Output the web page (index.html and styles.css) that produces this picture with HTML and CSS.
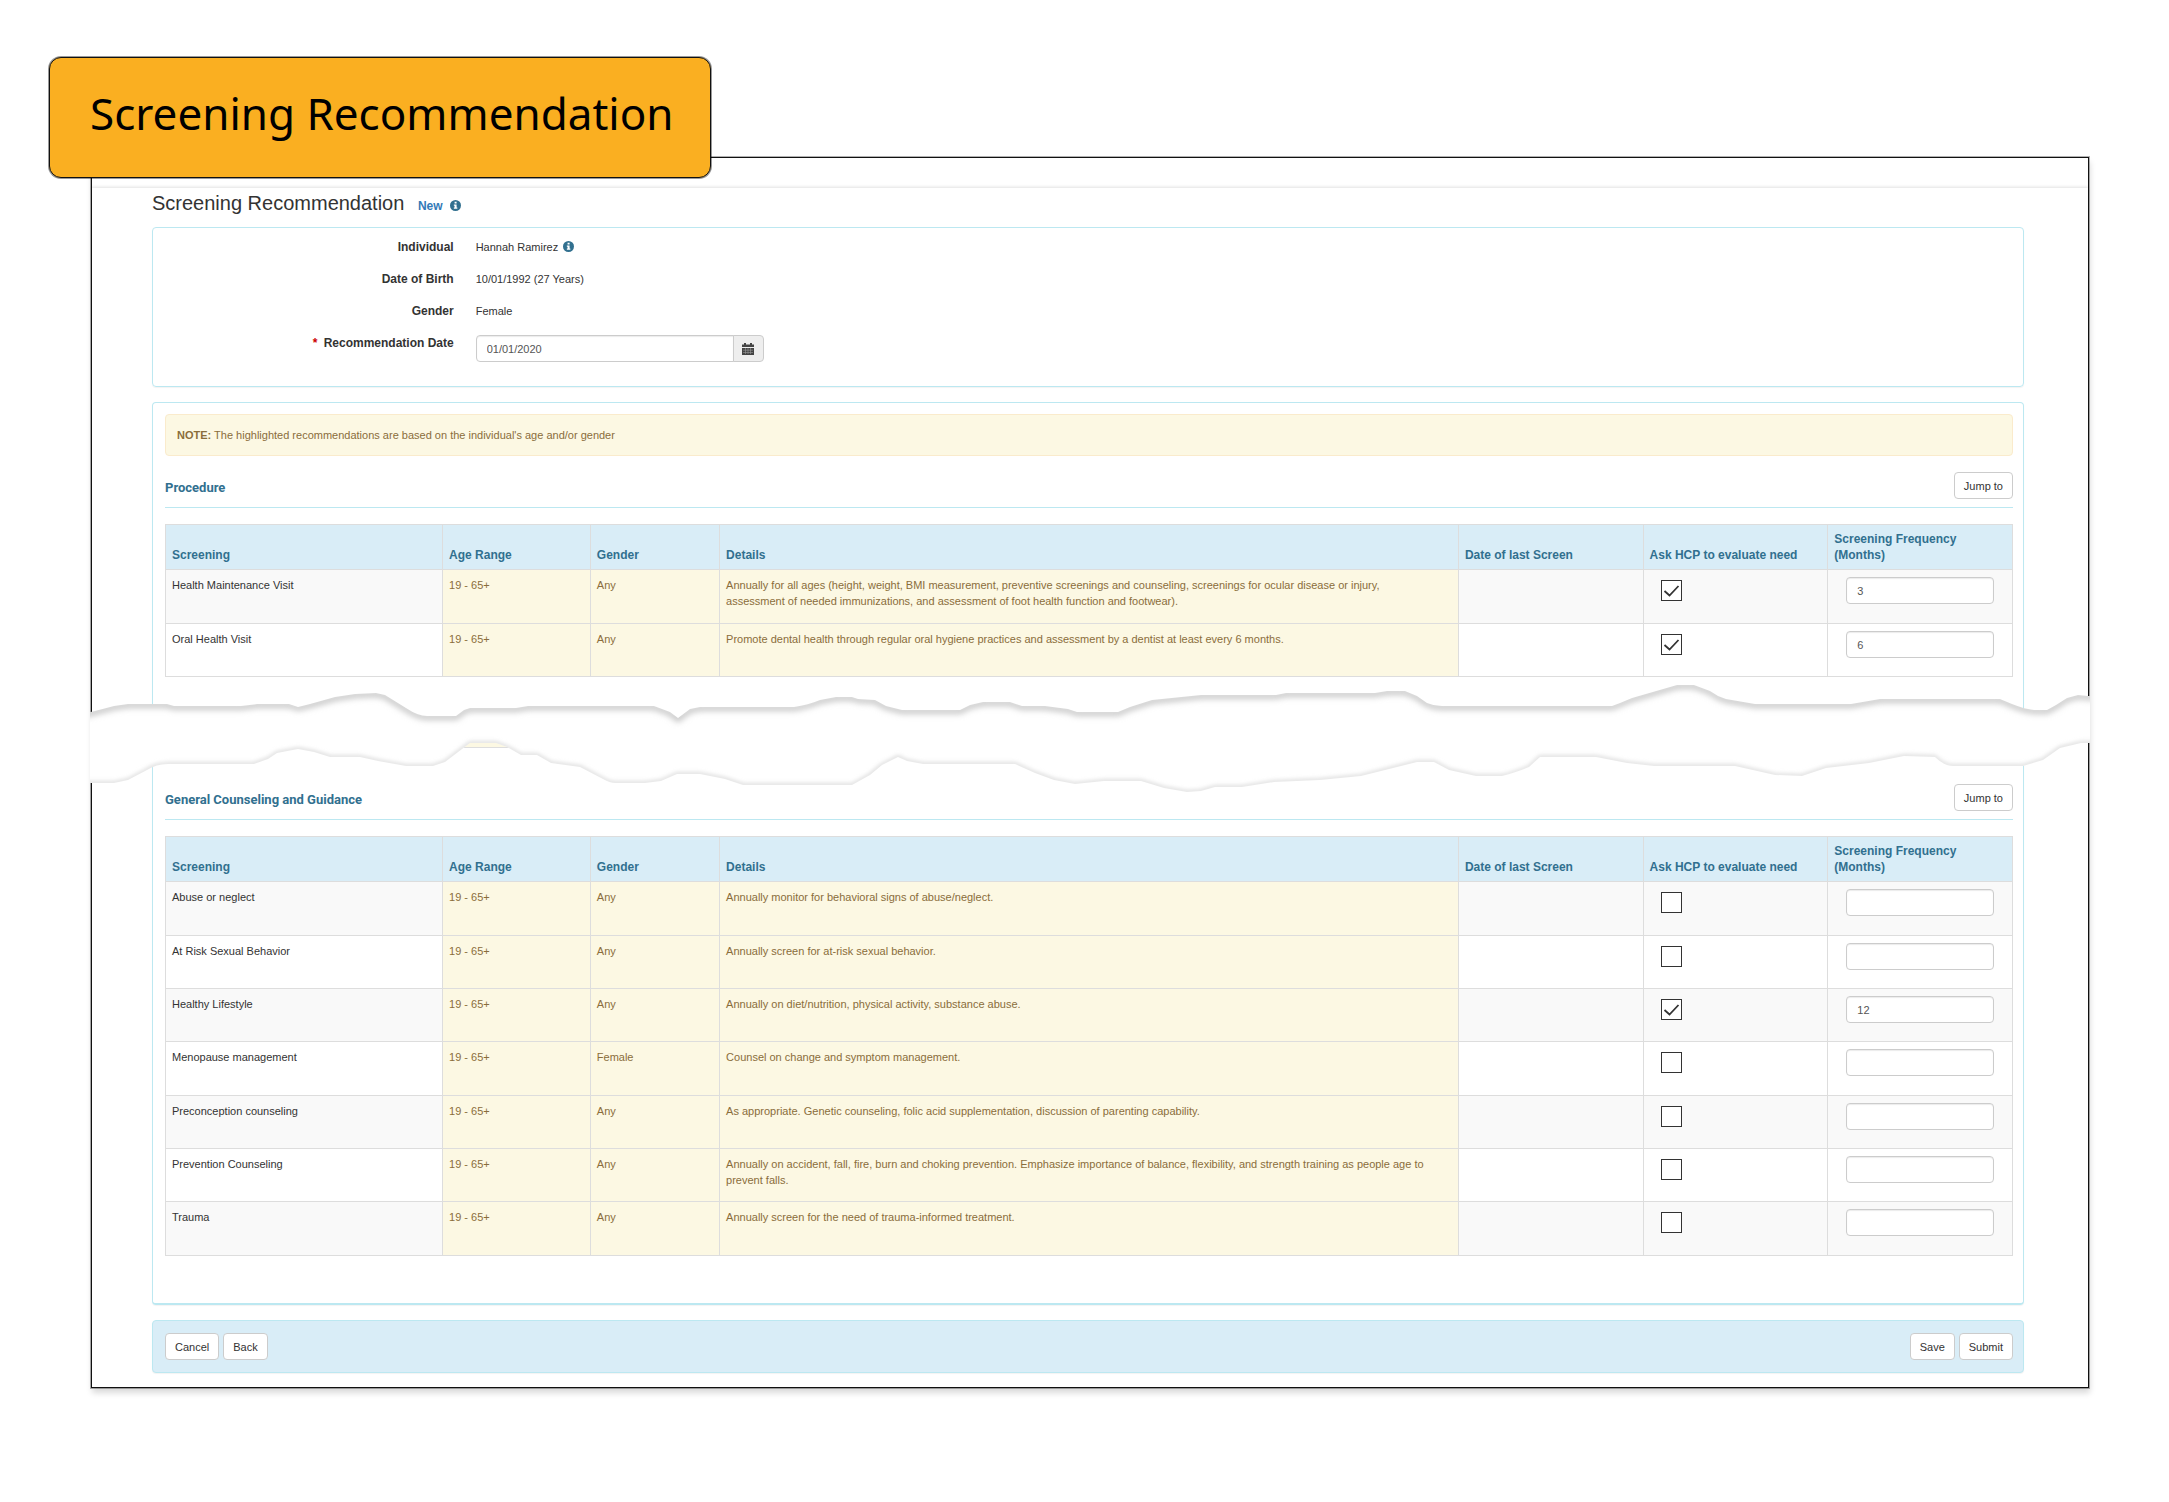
FILE: index.html
```html
<!doctype html>
<html lang="en">
  <head>
    <meta charset="UTF-8" />
    <meta name="viewport" content="width=device-width, initial-scale=1.0" />
    <title>Screening Recommendation</title>
    <link rel="stylesheet" href="styles.css" />
  </head>
  <body>
    <!-- Shared icons -->
    <svg class="icon-defs" aria-hidden="true">
      <symbol id="icon-info" viewBox="0 0 12 12">
        <circle cx="6" cy="6" r="6" fill="#31708f" />
        <path d="M5 2h2.200v1.800H5zM4.200 4.800h3v3.400h.8v1.400H4.200V8.200H5v-2h-.8z" fill="#fff" />
      </symbol>
    </svg>

    <div class="badge">Screening Recommendation</div>

    <main class="frame">
      <form class="screen" action="#" method="post">
        <h1>
          Screening Recommendation <small>New</small>
          <svg class="icon-info"><use href="#icon-info" /></svg>
        </h1>

        <section class="panel details">
          <div class="field">
            <span class="field-label">Individual</span>
            <span class="field-value">Hannah Ramirez
              <svg class="icon-info"><use href="#icon-info" /></svg></span>
          </div>
          <div class="field">
            <span class="field-label">Date of Birth</span>
            <span class="field-value">10/01/1992 (27 Years)</span>
          </div>
          <div class="field">
            <span class="field-label">Gender</span>
            <span class="field-value">Female</span>
          </div>
          <div class="field">
            <label class="field-label" for="rec-date"><span class="required">*</span> Recommendation Date</label>
            <div class="field-value date-group">
              <input type="text" id="rec-date" name="rec-date" value="01/01/2020" />
              <button type="button" aria-label="Open calendar">
                <svg width="12" height="12" viewBox="0 0 12 12">
                  <path d="M0 1.500h2V0h2v1.500h4V0h2v1.500h2V4H0z" fill="#444" />
                  <path d="M0 5h12v7H0z" fill="#444" />
                  <path d="M1 7.200h10M1 9.500h10M3.500 5v6M6 5v6M8.500 5v6" stroke="#999" stroke-width=".6" />
                </svg>
              </button>
            </div>
          </div>
        </section>

        <section class="panel recommendations">
          <p class="note"><strong>NOTE:</strong> The highlighted recommendations are based on the individual's age and/or gender</p>

          <div class="section-head">
            <h2>Procedure</h2>
            <button type="button" class="btn">Jump to</button>
          </div>
          <table>
            <thead>
              <tr>
                <th class="col-screening">Screening</th>
                <th class="col-age">Age Range</th>
                <th class="col-gender">Gender</th>
                <th class="col-details">Details</th>
                <th>Date of last Screen</th>
                <th>Ask HCP to evaluate need</th>
                <th>Screening Frequency (Months)</th>
              </tr>
            </thead>
            <tbody>
              <tr>
                <td>Health Maintenance Visit</td>
                <td class="hl">19 - 65+</td>
                <td class="hl">Any</td>
                <td class="hl text">Annually for all ages (height, weight, BMI measurement, preventive screenings and counseling, screenings for ocular disease or injury, assessment of needed immunizations, and assessment of foot health function and footwear).</td>
                <td></td>
                <td><input type="checkbox" aria-label="Ask HCP: Health Maintenance Visit" checked /></td>
                <td><input type="text" aria-label="Months: Health Maintenance Visit" value="3" /></td>
              </tr>
              <tr>
                <td>Oral Health Visit</td>
                <td class="hl">19 - 65+</td>
                <td class="hl">Any</td>
                <td class="hl text">Promote dental health through regular oral hygiene practices and assessment by a dentist at least every 6 months.</td>
                <td></td>
                <td><input type="checkbox" aria-label="Ask HCP: Oral Health Visit" checked /></td>
                <td><input type="text" aria-label="Months: Oral Health Visit" value="6" /></td>
              </tr>
            </tbody>
          </table>

          <!-- Torn paper gap between the two sections -->
          <svg class="tear" viewBox="90 677 2000 120" preserveAspectRatio="none" aria-hidden="true">
            <defs>
              <path id="tear-top" d="M84 714L91 712 114 706 128 704H167L174 706H241L257 704H289L298 707 310 704 335 697 355 694 376 693 385 695 406 708Q418 716 427 716H456L464 710 470 708H516L528 706H654L670 712 678 718 690 709 700 707H794Q808 705 820 700L836 697H852L858 699 875 700 886 706 902 710H960L970 705 983 702H1010L1022 706H1045L1068 709 1077 712H1118L1130 707 1152 700 1201 695H1276L1286 693H1375L1387 691H1405L1417 696 1427 703Q1434 706 1442 706H1612L1620 703 1632 698 1677 685H1694L1710 691 1718 696 1726 699 1755 704H1851L1880 699H2000L2012 704Q2027 710 2036 710L2047 710 2056 705 2067 698 2078 695 2088 696H2096" />
              <path id="tear-bottom" d="M84 783H114L128 780 147 770Q156 764 168 764H254L268 759 277 753 298 749 314 752 330 757H360L378 761 406 766H433L445 762 466 746 470 743H496L507 747 521 755H537L551 763 580 767 603 779Q610 783 615 783H645L661 781 677 774H700L725 779 743 785H852L870 775 882 765 898 757 907 761 923 764H1015L1035 773 1054 780 1075 784 1104 781H1141L1164 788 1187 792 1201 791 1215 787H1242L1274 782 1320 780 1361 776 1389 769 1417 762H1434L1449 770 1476 776H1502Q1518 772 1529 767L1540 757H1596L1627 763 1654 766H1735L1775 775 1802 776 1826 768 1869 763 1904 756 1935 757Q1944 766 1953 766H2023L2043 760 2060 748 2081 743 2096 743" />
              <clipPath id="tear-gap">
                <path d="M84 714L91 712 114 706 128 704H167L174 706H241L257 704H289L298 707 310 704 335 697 355 694 376 693 385 695 406 708Q418 716 427 716H456L464 710 470 708H516L528 706H654L670 712 678 718 690 709 700 707H794Q808 705 820 700L836 697H852L858 699 875 700 886 706 902 710H960L970 705 983 702H1010L1022 706H1045L1068 709 1077 712H1118L1130 707 1152 700 1201 695H1276L1286 693H1375L1387 691H1405L1417 696 1427 703Q1434 706 1442 706H1612L1620 703 1632 698 1677 685H1694L1710 691 1718 696 1726 699 1755 704H1851L1880 699H2000L2012 704Q2027 710 2036 710L2047 710 2056 705 2067 698 2078 695 2088 696H2096V743L2081 743 2060 748 2043 760 2023 766H1953Q1944 766 1935 757L1904 756 1869 763 1826 768 1802 776 1775 775 1735 766H1654L1627 763 1596 757H1540L1529 767Q1518 772 1502 776H1476L1449 770 1434 762H1417L1389 769 1361 776 1320 780 1274 782 1242 787H1215L1201 791 1187 792 1164 788 1141 781H1104L1075 784 1054 780 1035 773 1015 764H923L907 761 898 757 882 765 870 775 852 785H743L725 779 700 774H677L661 781 645 783H615Q610 783 603 779L580 767 551 763 537 755H521L507 747 496 743H470L466 746 445 762 433 766H406L378 761 360 757H330L314 752 298 749 277 753 268 759 254 764H168Q156 764 147 770L128 780 114 783H84Z" />
              </clipPath>
              <filter id="soft" x="-1%" y="-30%" width="102%" height="160%">
                <feGaussianBlur stdDeviation="3" />
              </filter>
              <filter id="softer" x="-1%" y="-30%" width="102%" height="160%">
                <feGaussianBlur stdDeviation="2" />
              </filter>
            </defs>
            <!-- bottom of the table hidden behind the tear -->
            <path d="M464 740h48v7h-48z" fill="#fcf8e3" />
            <path d="M464 747.500h48" stroke="#ddd" />
            <g clip-path="url(#tear-gap)">
              <rect x="84" y="677" width="2012" height="120" fill="#fff" />
              <use class="tear-shadow-top" href="#tear-top" y="1" filter="url(#soft)" />
              <use class="tear-shadow-bottom" href="#tear-bottom" filter="url(#softer)" />
            </g>
          </svg>

          <div class="section-head">
            <h2>General Counseling and Guidance</h2>
            <button type="button" class="btn">Jump to</button>
          </div>
          <table>
            <thead>
              <tr>
                <th class="col-screening">Screening</th>
                <th class="col-age">Age Range</th>
                <th class="col-gender">Gender</th>
                <th class="col-details">Details</th>
                <th>Date of last Screen</th>
                <th>Ask HCP to evaluate need</th>
                <th>Screening Frequency (Months)</th>
              </tr>
            </thead>
            <tbody>
              <tr>
                <td>Abuse or neglect</td>
                <td class="hl">19 - 65+</td>
                <td class="hl">Any</td>
                <td class="hl text">Annually monitor for behavioral signs of abuse/neglect.</td>
                <td></td>
                <td><input type="checkbox" aria-label="Ask HCP: Abuse or neglect" /></td>
                <td><input type="text" aria-label="Months: Abuse or neglect" /></td>
              </tr>
              <tr>
                <td>At Risk Sexual Behavior</td>
                <td class="hl">19 - 65+</td>
                <td class="hl">Any</td>
                <td class="hl text">Annually screen for at-risk sexual behavior.</td>
                <td></td>
                <td><input type="checkbox" aria-label="Ask HCP: At Risk Sexual Behavior" /></td>
                <td><input type="text" aria-label="Months: At Risk Sexual Behavior" /></td>
              </tr>
              <tr>
                <td>Healthy Lifestyle</td>
                <td class="hl">19 - 65+</td>
                <td class="hl">Any</td>
                <td class="hl text">Annually on diet/nutrition, physical activity, substance abuse.</td>
                <td></td>
                <td><input type="checkbox" aria-label="Ask HCP: Healthy Lifestyle" checked /></td>
                <td><input type="text" aria-label="Months: Healthy Lifestyle" value="12" /></td>
              </tr>
              <tr>
                <td>Menopause management</td>
                <td class="hl">19 - 65+</td>
                <td class="hl">Female</td>
                <td class="hl text">Counsel on change and symptom management.</td>
                <td></td>
                <td><input type="checkbox" aria-label="Ask HCP: Menopause management" /></td>
                <td><input type="text" aria-label="Months: Menopause management" /></td>
              </tr>
              <tr>
                <td>Preconception counseling</td>
                <td class="hl">19 - 65+</td>
                <td class="hl">Any</td>
                <td class="hl text">As appropriate. Genetic counseling, folic acid supplementation, discussion of parenting capability.</td>
                <td></td>
                <td><input type="checkbox" aria-label="Ask HCP: Preconception counseling" /></td>
                <td><input type="text" aria-label="Months: Preconception counseling" /></td>
              </tr>
              <tr>
                <td>Prevention Counseling</td>
                <td class="hl">19 - 65+</td>
                <td class="hl">Any</td>
                <td class="hl text">Annually on accident, fall, fire, burn and choking prevention. Emphasize importance of balance, flexibility, and strength training as people age to prevent falls.</td>
                <td></td>
                <td><input type="checkbox" aria-label="Ask HCP: Prevention Counseling" /></td>
                <td><input type="text" aria-label="Months: Prevention Counseling" /></td>
              </tr>
              <tr>
                <td>Trauma</td>
                <td class="hl">19 - 65+</td>
                <td class="hl">Any</td>
                <td class="hl text">Annually screen for the need of trauma-informed treatment.</td>
                <td></td>
                <td><input type="checkbox" aria-label="Ask HCP: Trauma" /></td>
                <td><input type="text" aria-label="Months: Trauma" /></td>
              </tr>
            </tbody>
          </table>
        </section>

        <div class="panel actions">
          <div class="btn-group">
            <button type="button" class="btn">Cancel</button>
            <button type="button" class="btn">Back</button>
          </div>
          <div class="btn-group">
            <button type="button" class="btn">Save</button>
            <button type="submit" class="btn">Submit</button>
          </div>
        </div>
      </form>
    </main>
  </body>
</html>
```
FILE: styles.css
```css
* {
  box-sizing: border-box;
}

body {
  margin: 0;
  padding: 57px 80px 100px 91px;
  background: #fff;
  color: #333;
  font-family: "Liberation Sans", Arial, sans-serif;
  font-size: 11px;
  line-height: 16px;
}

.icon-defs {
  position: absolute;
  width: 0;
  height: 0;
}

/* Orange title badge, overlaps the frame corner */
.badge {
  position: relative;
  z-index: 1;
  width: fit-content;
  margin-left: -42px;
  padding: 26px 37px 35px 40px;
  border: 1px solid #111;
  border-radius: 12px;
  background: #faaf21;
  box-shadow: 0 0 0 1px rgba(0, 0, 0, 0.4);
  color: #000;
  font-family: "Noto Sans", sans-serif;
  font-size: 44px;
  line-height: 58px;
  white-space: nowrap;
}

.frame {
  margin-top: -21px;
  padding-top: 30px;
  border: 1px solid #111;
  box-shadow: 0 0 0 1px rgba(0, 0, 0, 0.3), 1px 5px 6px rgba(0, 0, 0, 0.15);
}

.screen {
  padding: 3px 64px 14px 60px;
  box-shadow: 0 -1px 3px rgba(0, 0, 0, 0.12);
}

h1 {
  margin: 0 0 12px;
  font-size: 20px;
  font-weight: normal;
  line-height: 24px;
}

h1 small {
  margin-left: 8px;
  color: #337ab7;
  font-size: 12px;
  font-weight: bold;
  line-height: 12px;
}

.icon-info {
  width: 11px;
  height: 11px;
  margin-left: 2px;
  vertical-align: -1px;
}

.panel {
  border: 1px solid #bce8f1;
  border-radius: 4px;
  box-shadow: 0 1px 1px rgba(0, 0, 0, 0.05);
}

/* Individual details */
.details {
  padding: 11px 0 24px;
}

.field {
  display: grid;
  grid-template-columns: 2fr 10fr;
  margin-bottom: 16px;
}

.field:last-child {
  margin-bottom: 0;
}

.field-label {
  padding-right: 11px;
  font-size: 12px;
  font-weight: bold;
  text-align: right;
}

.required {
  margin-right: 3px;
  color: #c00;
}

.field-value {
  padding-left: 11px;
}

.date-group {
  display: flex;
}

input[type="text"] {
  height: 27px;
  padding: 0 10px;
  border: 1px solid #ccc;
  border-radius: 4px;
  background: #fff;
  box-shadow: inset 0 1px 1px rgba(0, 0, 0, 0.08);
  color: #555;
  font: inherit;
}

.date-group input[type="text"] {
  width: 258px;
  border-radius: 4px 0 0 4px;
}

.date-group button {
  display: flex;
  align-items: center;
  justify-content: center;
  width: 31px;
  margin-left: -1px;
  padding: 0;
  border: 1px solid #ccc;
  border-radius: 0 4px 4px 0;
  background: #eee;
}

/* Recommendation lists */
.recommendations {
  margin-top: 15px;
  padding: 11px 10px 47px 12px;
  border-bottom-width: 2px;
}

.note {
  margin: 0 0 16px;
  padding: 12px 11px;
  border: 1px solid #faebcc;
  border-radius: 4px;
  background: #fcf8e3;
  color: #8a6d3b;
}

.section-head {
  display: flex;
  justify-content: space-between;
  margin-bottom: 16px;
  padding-bottom: 8px;
  border-bottom: 1px solid #bce8f1;
}

h2 {
  margin: 8px 0 0;
  color: #31708f;
  font-family: Roboto, Arial, sans-serif;
  font-size: 13px;
  line-height: 16px;
}

.btn {
  height: 27px;
  padding: 0 9px;
  border: 1px solid #ccc;
  border-radius: 4px;
  background: #fff;
  color: #333;
  font: inherit;
}

table {
  width: 100%;
  border-collapse: collapse;
  table-layout: fixed;
}

th,
td {
  padding: 7px 6px 5px;
  border: 1px solid #ddd;
  text-align: left;
  vertical-align: top;
}

th {
  height: 45px;
  padding: 6px;
  background: #d9edf7;
  color: #31708f;
  font-size: 12px;
  vertical-align: bottom;
}

.col-screening {
  width: 15%;
}

.col-age {
  width: 8%;
}

.col-gender {
  width: 7%;
}

.col-details {
  width: 40%;
}

tbody tr {
  height: 53px;
}

tbody tr:nth-child(3n + 1) {
  height: 54px;
}

tbody tr:nth-child(odd) {
  background: #f9f9f9;
}

td.hl {
  background: #fcf8e3;
  color: #8a6d3b;
}

td.text {
  padding-right: 24px;
}

td input[type="text"] {
  display: block;
  width: 148px;
  margin-left: 12px;
}

input[type="checkbox"] {
  display: block;
  appearance: none;
  width: 21px;
  height: 21px;
  margin: 3px 0 0 11px;
  border: 1px solid #333;
  background: #fff;
}

input[type="checkbox"]:checked {
  background: url("data:image/svg+xml,%3Csvg xmlns='http://www.w3.org/2000/svg' viewBox='0 0 19 19'%3E%3Cpath d='M2.500 10l5 4.500L16.500 5' fill='none' stroke='%23333' stroke-width='1.800'/%3E%3C/svg%3E") center / 19px 19px no-repeat #fff;
}

/* The tear reaches across the panel and the frame borders */
.tear {
  position: relative;
  display: block;
  width: calc(100% + 152px);
  height: 120px;
  margin: 0 -77px -13px -75px;
  pointer-events: none;
}

.tear-shadow-top {
  fill: none;
  stroke: #bbb;
  stroke-width: 5px;
}

.tear-shadow-bottom {
  fill: none;
  stroke: #d4d4d4;
  stroke-width: 3px;
}

/* Bottom bar */
.actions {
  display: flex;
  justify-content: space-between;
  margin-top: 15px;
  padding: 12px 10px 12px 12px;
  background: #d9edf7;
}

.btn-group {
  display: flex;
  gap: 4px;
}
```
